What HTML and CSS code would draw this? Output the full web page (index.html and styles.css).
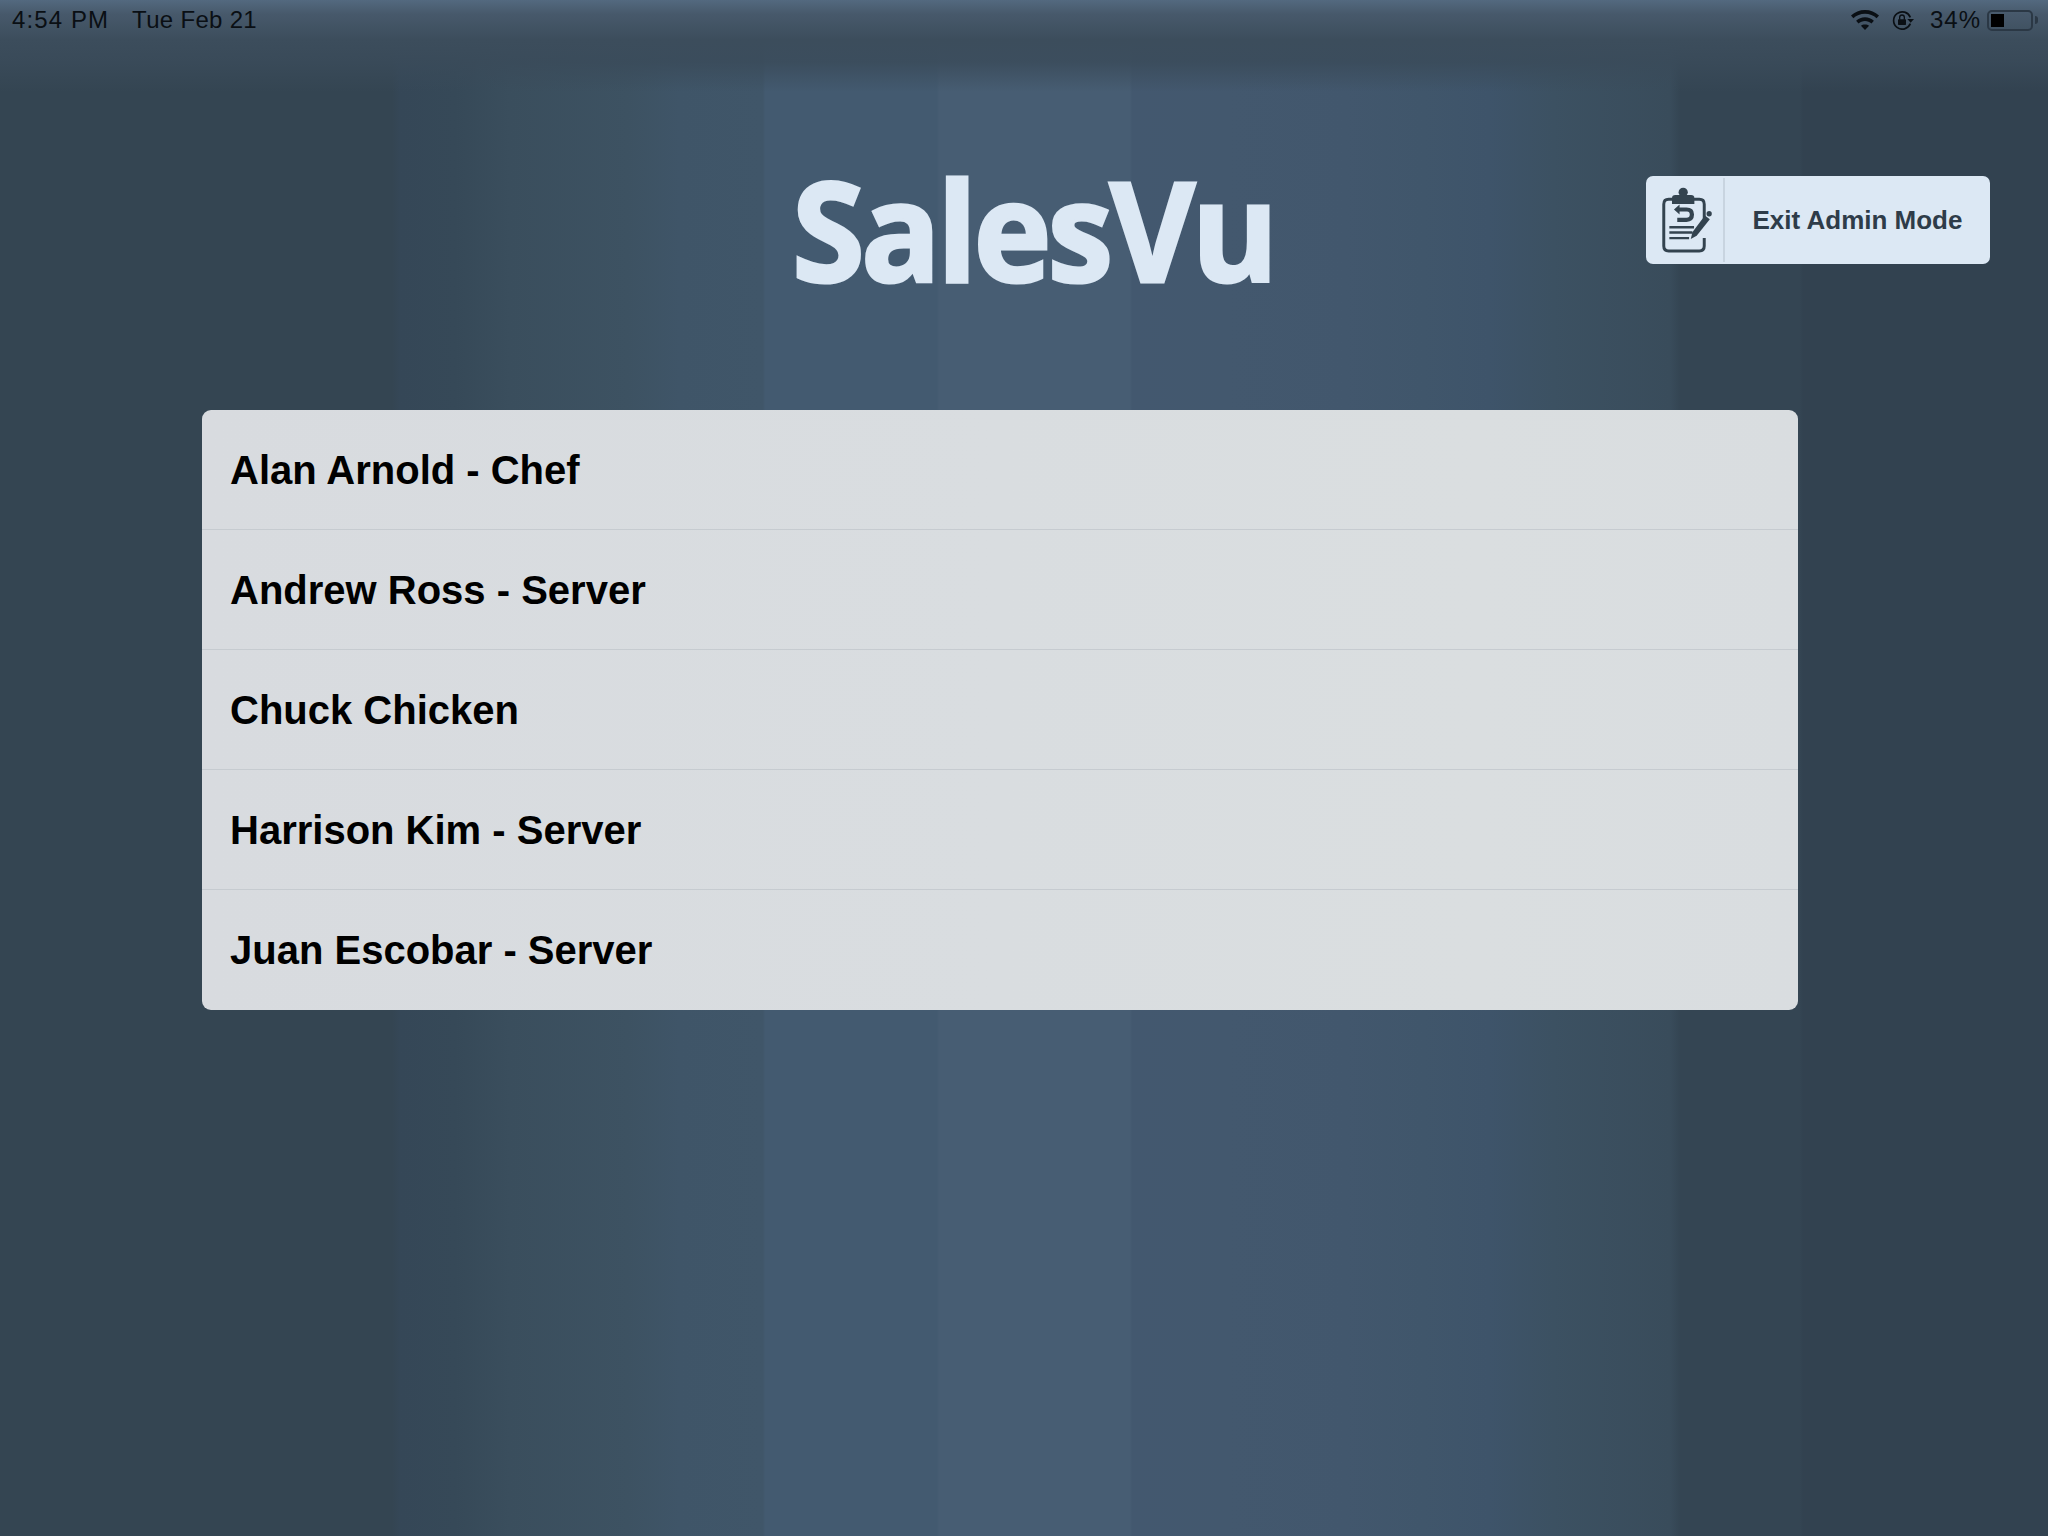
FILE: index.html
```html
<!DOCTYPE html>
<html lang="en">
<head>
<meta charset="utf-8">
<title>SalesVu</title>
<link rel="stylesheet" href="styles.css">
</head>
<body>
<div class="status">
  <div class="status-left"><span class="time">4:54 PM</span><span class="date">Tue Feb 21</span></div>
  <div class="status-right">
    <svg class="wifi" viewBox="0 0 82 58" width="28" height="20"><path d="M41 0C25 0 11 6 0 16l7 8c9-8 21-13 34-13s25 5 34 13l7-8C71 6 57 0 41 0zM41 21c-10 0-19 4-26 10l7 8c5-4 12-7 19-7s14 3 19 7l7-8c-7-6-16-10-26-10zM41 42c-5 0-9 1-12 4l12 12 12-12c-3-3-7-4-12-4z" fill="#0a0f14"/></svg>
    <svg class="lock" viewBox="0 0 66 60" width="22" height="20"><path d="M55 22A26 26 0 1 0 55 41" fill="none" stroke="#0a0f14" stroke-width="5"/><path d="M46 27h20L56 38z" fill="#0a0f14"/><rect x="18" y="28" width="24" height="17" rx="2" fill="#0a0f14"/><path d="M23 29v-7a7 7 0 0 1 14 0v7" fill="none" stroke="#0a0f14" stroke-width="4"/></svg>
    <span class="pct">34%</span>
    <div class="battery"><div class="battery-fill"></div></div>
    <div class="battery-nub"></div>
  </div>
</div>
<header class="top">
  <div class="logo">SalesVu</div>
  <button class="exit">
    <span class="exit-icon">
      <svg viewBox="0 0 234 264" width="78" height="88">
        <g transform="translate(12,-18)">
          <path d="M70 87H57q-15 0-15 15v127q0 15 15 15h93q15 0 15-15v-24M133 87h17q15 0 15 15v44" fill="none" stroke="#33434f" stroke-width="9"/>
          <circle cx="101" cy="66" r="14" fill="#33434f"/>
          <path d="M67 101V84q0-10 10-10h48q10 0 10 10v17z" fill="#33434f"/>
          <path d="M73 118l17-15v9h21q23 0 23 21t-23 23H83v-13h28q10 0 10-10t-10-9H90v9z" fill="#33434f"/>
          <path d="M59 172h75M59 188h70M59 205h60" stroke="#33434f" stroke-width="7"/>
          <path d="M167 136l15 12-40 50-18 10 5-21z" fill="#33434f"/>
          <circle cx="180" cy="131" r="8" fill="#33434f"/>
        </g>
      </svg>
    </span>
    <span class="exit-label">Exit Admin Mode</span>
  </button>
</header>
<main class="list">
  <div class="row">Alan Arnold - Chef</div>
  <div class="row">Andrew Ross - Server</div>
  <div class="row">Chuck Chicken</div>
  <div class="row">Harrison Kim - Server</div>
  <div class="row">Juan Escobar - Server</div>
</main>
</body>
</html>
```

FILE: styles.css
```css
* { box-sizing: border-box; }
html, body { margin: 0; height: 100%; }
body {
  width: 2048px;
  height: 1536px;
  overflow: hidden;
  font-family: "Liberation Sans", Arial, sans-serif;
  background:
    linear-gradient(180deg, #53697f 0, #47596b 14px, #3c4d5c 40px, rgba(58,75,90,.85) 62px, rgba(58,75,90,0) 92px),
    linear-gradient(90deg, #344552 0, #344552 392px, #354757 400px, #364958 455px, #3a4e5d 510px, #3d5262 627px, #3f5568 680px, #405669 763px, #435a70 765px, #435a70 937px, #475d73 939px, #475d73 1130px, #43586f 1132px, #43586e 1227px, #42576d 1345px, #40566b 1423px, #3e546a 1489px, #3c5162 1553px, #394c5b 1670px, #344553 1680px, #344553 1800px, #324250 1803px, #324250 2048px);
}
.status {
  height: 40px;
  display: flex;
  justify-content: space-between;
  align-items: center;
  padding: 0 10px 0 12px;
  font-size: 24px;
  color: #0a0f14;
}
.status-left { display: flex; gap: 23px; }
.time { letter-spacing: 1.1px; }
.date { letter-spacing: .3px; }
.status-right { display: flex; align-items: center; }
.wifi { margin-right: 13px; }
.lock { margin-right: 16px; }
.pct { margin-right: 6px; letter-spacing: 1px; }
.battery {
  width: 46px;
  height: 21px;
  border: 2px solid #2b3845;
  border-radius: 5px;
  padding: 2px;
}
.battery-fill { width: 13px; height: 100%; background: #000; }
.battery-nub {
  width: 3px;
  height: 8px;
  margin-left: 2px;
  background: #2b3845;
  border-radius: 0 3px 3px 0;
}
.top {
  display: flex;
  justify-content: space-between;
  align-items: flex-start;
  padding: 133px 58px 0 792px;
  height: 370px;
}
.logo {
  font-family: "Open Sans", sans-serif;
  font-weight: 700;
  font-size: 139px;
  line-height: 110px;
  letter-spacing: -4px;
  color: #dce8f4;
  -webkit-text-stroke: 3px #dce8f4;
  transform: scaleX(.95);
  transform-origin: left top;
}
.exit {
  width: 344px;
  height: 88px;
  margin-top: 3px;
  padding: 0;
  border: 0;
  border-radius: 7px;
  background: #dce8f4;
  display: flex;
  align-items: center;
  font-family: inherit;
}
.exit-icon {
  width: 79px;
  height: 84px;
  border-right: 2px solid #c8d4e0;
  display: flex;
  align-items: center;
}
.exit-label {
  flex: 1;
  text-align: center;
  font-size: 26px;
  font-weight: 700;
  color: #2e3c49;
}
.list {
  width: 1596px;
  margin-left: 202px;
  background: linear-gradient(90deg, #d8dbdf, #d9dde0 50%, #dadee0 80%, #d9dde0);
  border-radius: 9px;
  overflow: hidden;
}
.row {
  height: 120px;
  display: flex;
  align-items: center;
  padding: 2px 0 0 28px;
  font-size: 40px;
  font-weight: 700;
  color: #000;
  border-bottom: 1px solid #c6cbd0;
}
.row:last-child { border-bottom-color: transparent; }
```
